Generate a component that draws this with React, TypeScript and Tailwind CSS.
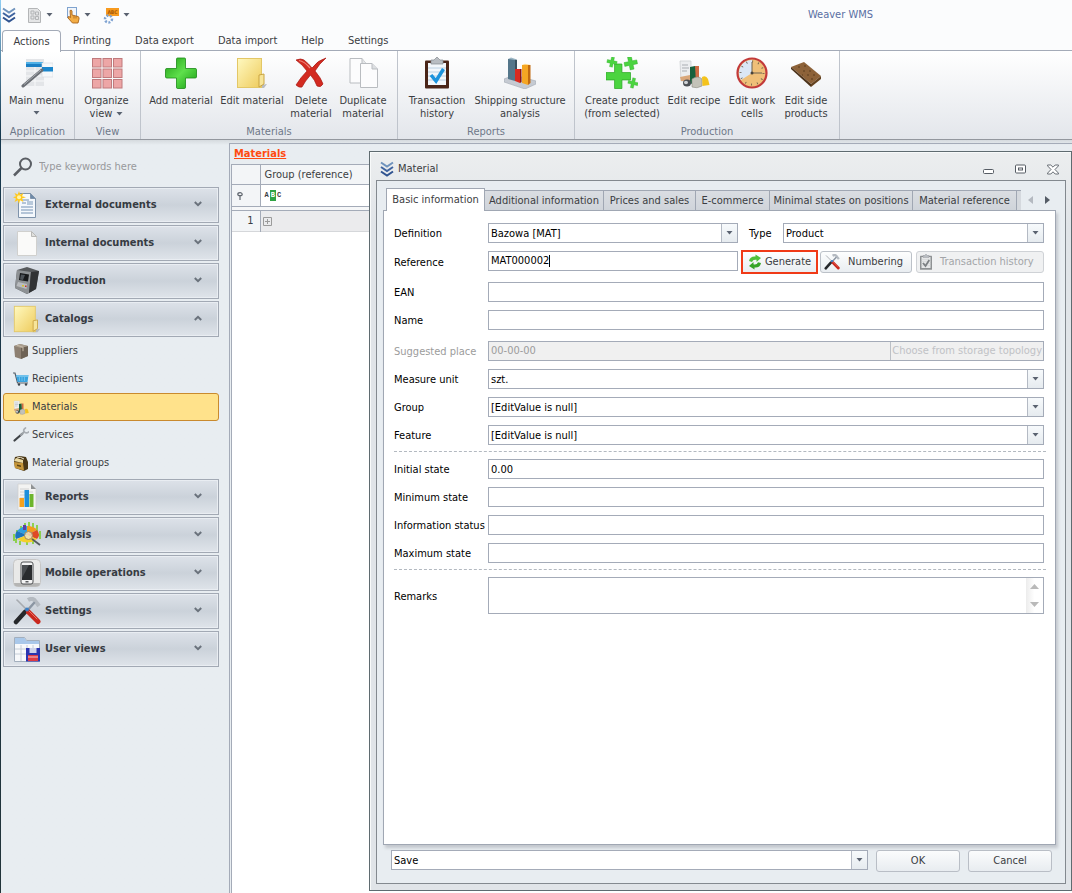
import { clsx } from "clsx";
import type { ReactNode } from "react";

/* ---------- icons ---------- */

function LogoIcon({ className }: { className?: string }) {
  return (
    <svg viewBox="0 0 14 16" className={clsx("h-4 w-[14px] shrink-0", className)} fill="none" stroke="#3f64a0" strokeWidth="2">
      <path d="M1 1.500 L7 5.500 L13 1.500" stroke="#6f93bd" />
      <path d="M1 6 L7 10 L13 6" />
      <path d="M1 10.500 L7 14.500 L13 10.500" stroke="#2f5390" />
    </svg>
  );
}

function Caret({ className }: { className?: string }) {
  return (
    <svg viewBox="0 0 7 4" className={clsx("h-1 w-[7px] shrink-0", className)}>
      <path d="M.5 0 H6.500 L3.500 3.500 Z" fill="#5a6270" />
    </svg>
  );
}

function MainMenuIcon() {
  return (
    <svg viewBox="0 0 32 32" className="size-8">
      <rect x="5" y="2" width="18" height="27" fill="#e3e5e8" />
      <path d="M5 14h18M5 19h18M5 24h18M14 6v23" stroke="#f8f9fa" />
      <rect x="5" y="5" width="17" height="5" fill="#1b7fc4" />
      <rect x="5" y="5" width="17" height="2" fill="#4fb0e6" />
      <rect x="21" y="6" width="11" height="14" fill="#f6f8fa" stroke="#d4d8dd" strokeWidth=".6" />
      <rect x="21" y="10" width="11" height="4.500" fill="#1b86cc" />
      <path d="M21 13 L2 29" stroke="#6b6f75" strokeWidth="3" strokeLinecap="round" />
      <path d="M20 13 L3 27.500" stroke="#a9adb2" strokeWidth="1" />
    </svg>
  );
}

function OrganizeIcon() {
  return (
    <svg viewBox="0 0 32 32" className="size-8">
      {[1.5, 12, 22.5].map((x) =>
        [1.5, 12, 22.5].map((y) => (
          <rect key={`${x}-${y}`} x={x} y={y} width="8.500" height="8.500" fill="#eda6a6" stroke="#c07a7c" />
        )),
      )}
    </svg>
  );
}

function PlusIcon() {
  return (
    <svg viewBox="0 0 32 32" className="size-8">
      <defs>
        <linearGradient id="plus" x1="0" y1="0" x2="1" y2="1">
          <stop offset="0" stopColor="#1f9c14" />
          <stop offset=".5" stopColor="#5fe04c" />
          <stop offset="1" stopColor="#159a10" />
        </linearGradient>
      </defs>
      <path
        d="M12.500 1h7q1 0 1 1v9.500H30q1.500 0 1.500 1V20q0 1-1.500 1h-9.500v9q0 1.500-1 1.500h-7q-1 0-1-1.500v-9H2q-1.500 0-1.500-1v-7.500q0-1 1.500-1h9.500V2q0-1 1-1z"
        fill="url(#plus)"
        stroke="#1c8a17"
        strokeWidth=".8"
      />
    </svg>
  );
}

function FolderIcon({ className = "size-8" }: { className?: string }) {
  return (
    <svg viewBox="0 0 32 32" className={className}>
      <defs>
        <linearGradient id="folder" x1="0" y1="0" x2="1" y2="1">
          <stop offset="0" stopColor="#fff9c0" />
          <stop offset="1" stopColor="#eecb5c" />
        </linearGradient>
      </defs>
      <path d="M25 28 l6 -1 -3 4 -6 0z" fill="#b9bcc0" />
      <rect x="1.500" y="1.500" width="24" height="29" fill="url(#folder)" stroke="#e3c766" />
      <path d="M23 18 l5 -1 v10 l-5 3z" fill="#f7e59a" stroke="#c9a443" />
    </svg>
  );
}

function DeleteIcon() {
  return (
    <svg viewBox="0 0 32 32" className="size-8">
      <path
        d="M1 3 Q6 1 9 3 Q14 7 17 11 Q23 3 31 1 Q24 7 20 14 Q26 21 28 27 Q26 31 22 29 Q20 23 15.500 18 Q10 24 7 30 Q4 31 1 28 Q6 20 12 14 Q8 8 1 3z"
        fill="#d32a20"
        stroke="#a61a14"
        strokeWidth=".7"
      />
      <path d="M4 3.500 Q9 4 15 11" stroke="#f0857a" strokeWidth="1.200" fill="none" />
    </svg>
  );
}

function DuplicateIcon() {
  return (
    <svg viewBox="0 0 32 32" className="size-8" fill="#fcfcfd" stroke="#b9bcc0">
      <path d="M3 1.500h12l4 5V26H3z" />
      <path d="M15 1.500v5h4" fill="#e4e6e8" />
      <path d="M13.500 6.500H25l5.500 5.500v18.500h-17z" />
      <path d="M25 6.500V12h5.500" fill="#dcdfe2" />
    </svg>
  );
}

function ClipboardIcon({ muted, className = "size-8" }: { muted?: boolean; className?: string }) {
  return (
    <svg viewBox="0 0 32 32" className={className}>
      <rect x="4" y="3.500" width="24" height="28" rx="1" fill={muted ? "#8f9294" : "#4a2518"} />
      <rect x="7" y="6" width="18" height="22" fill={muted ? "#e6e7e8" : "#f3f7fb"} />
      <path d="M7 11h18M7 15h18M7 19h18M7 23h18" stroke={muted ? "#cfd1d3" : "#bcd0e2"} />
      <path d="M10 3h3l3-3 3 3h3v4H10z" fill="#b9bdc2" stroke="#85898f" strokeWidth=".7" />
      <path d="M10 18 l5 6 L22.500 12" fill="none" stroke={muted ? "#7c8083" : "#1c93dd"} strokeWidth="3.500" />
    </svg>
  );
}

function ChartIcon() {
  return (
    <svg viewBox="0 0 32 32" className="size-8">
      <path d="M0 22 L10 18 L32 24 L32 27 L21 32 L0 25z" fill="#c5cad2" stroke="#a3a9b3" strokeWidth=".6" />
      <path d="M4 2h7v22l-7-2z" fill="#54768a" />
      <path d="M11 2l2 1v20l-2 1z" fill="#38515f" />
      <path d="M4 2l3-1.500 6 2-2 .5z" fill="#9cb6c4" />
      <path d="M11 12h5v14l-5-2z" fill="#d92a20" />
      <path d="M16 12l1.500 0v13l-1.500 1z" fill="#8e1511" />
      <path d="M18 8h6v20l-6-2z" fill="#f5a623" />
      <path d="M24 8l2.500 0v18l-2.500 2z" fill="#c26a10" />
      <path d="M18 8l3-1.200 5.500 1.200z" fill="#ffd88a" />
    </svg>
  );
}

const CROSS = "M3.500 0h3v3.500H10v3H6.500V10h-3V6.500H0v-3h3.500z";

function CreateProductIcon() {
  return (
    <svg viewBox="0 0 32 32" className="size-8" fill="#4bd440" stroke="#2aa824" strokeWidth=".3" strokeLinejoin="round">
      <path d={CROSS} transform="translate(0 7) scale(2.450)" />
      <path d={CROSS} transform="translate(1 0) rotate(12 5 5)" />
      <path d={CROSS} transform="translate(18 0) rotate(-12 5 5) scale(1.300)" />
      <path d={CROSS} transform="translate(22 21) rotate(14 5 5)" />
    </svg>
  );
}

function RecipeIcon({ className = "size-8" }: { className?: string }) {
  return (
    <svg viewBox="0 0 32 32" className={className}>
      <path d="M2 4h11v20H3z" fill="#eceef0" stroke="#c7cacd" strokeWidth=".7" />
      <path d="M4 8h6M4 11h7M4 14h5" stroke="#a9adb2" />
      <path d="M2 20l10-2v6H3z" fill="#d9a77a" />
      <path d="M17 9h4v17h-4z" fill="#cf6a43" />
      <path d="M12 10l5-1 1 17-6 1z" fill="#17603c" />
      <ellipse cx="9" cy="26" rx="4" ry="3.500" fill="#4b4f54" />
      <ellipse cx="8" cy="25.500" rx="2" ry="1.800" fill="#cfd2d6" />
      <path d="M14 22q6-4 10 0v7q-5 3-10 1z" fill="#c3c2b8" stroke="#8d8c82" strokeWidth=".6" />
      <path d="M24 20q4-2 6 2l1.500 6-7 1z" fill="#f4c31c" />
    </svg>
  );
}

function ClockIcon() {
  return (
    <svg viewBox="0 0 32 32" className="size-8">
      <circle cx="16" cy="16" r="14.500" fill="#efbf78" stroke="#c23a3a" strokeWidth="2.200" />
      <path d="M16 16V3A13 13 0 0 0 5 23z" fill="#dbe7f5" />
      <circle cx="16" cy="16" r="11.500" fill="none" stroke="#62584a" strokeWidth="2" strokeDasharray=".8 5.220" />
      <path d="M16 5v11h10" fill="none" stroke="#6c6250" />
      <circle cx="16" cy="16" r="1.500" fill="#4a4338" />
    </svg>
  );
}

function SideProductIcon() {
  return (
    <svg viewBox="0 0 32 32" className="size-8">
      <path d="M1 10L14 5l17 14-10 8z" fill="#8d6239" />
      <path d="M1 10l20 17v3L1 12z" fill="#4c3219" />
      <path d="M31 19L21 27v3l10-8z" fill="#64421f" />
      <path d="M8 10h2M14 9h2M13 14h2M19 14h2M17 18h2M23 18h2M21 22h2M12 18h1" stroke="#5b3c1e" />
    </svg>
  );
}

function NewDocIcon() {
  return (
    <svg viewBox="0 0 28 28" className="size-7">
      <path d="M5.500 2.500h12l5 5v19h-17z" fill="#f4f8fc" stroke="#7e93ab" />
      <path d="M17.500 2.500v5h5z" fill="#6e8aa8" stroke="#7e93ab" />
      <path d="M9 9h7M9 12h4M8 16h12M8 19h12M8 22h12" stroke="#9fb4cb" strokeWidth="1.500" />
      <rect x="14" y="10" width="6" height="4" fill="#b8c9db" />
      <path d="M6 0l1.200 3.500L10.500 2 9 5.200l4 1-4 1.300L10.500 11 7 9.300 6 13 4.800 9.300 1.500 11 3 7.500l-3-1.300 3-1L1.500 2l3.300 1.500z" fill="#ffc91f" />
      <circle cx="6" cy="6.300" r="2" fill="#fff3a8" />
    </svg>
  );
}

function BlankDocIcon() {
  return (
    <svg viewBox="0 0 28 28" className="size-7">
      <path d="M4.500 2.500h14l5 5v19h-19z" fill="#fafaf9" stroke="#d0d0ce" />
      <path d="M18.500 2.500v5h5z" fill="#e0e0de" stroke="#b9b9b7" />
    </svg>
  );
}

function MachineIcon() {
  return (
    <svg viewBox="0 0 28 28" className="size-7">
      <path d="M4 3L14 0l12 4-3 18-9 5-12-6z" fill="#56595c" />
      <path d="M4 3l14 2-2 21-2 1-12-6z" fill="#8d9194" />
      <path d="M18 5l8-1-3 18-7 4z" fill="#303234" />
      <path d="M7 6l9 1.500-1 7-9-1.500z" fill="#17191b" />
      <path d="M8 7.500l4 .5-2 5-3-.5z" fill="#4b5157" />
      <path d="M5 15l9 2-.5 5-10-3z" fill="#b9bcbf" />
      <rect x="9" y="18" width="2" height="1.500" fill="#d8c22f" />
      <rect x="12" y="18.500" width="1.500" height="1.500" fill="#c7372c" />
    </svg>
  );
}

function ReportIcon() {
  return (
    <svg viewBox="0 0 28 28" className="size-7">
      <path d="M5 1h13l5 5v21H5z" fill="#f3f3f2" stroke="#cfcfcf" strokeWidth=".7" />
      <path d="M18 1v5h5z" fill="#8f9294" />
      <path d="M7 6h9M7 9h13M7 12h13M7 15h13" stroke="#d2d2d2" />
      <rect x="6.500" y="15" width="4.500" height="9" fill="#f5a11d" />
      <rect x="11.500" y="7" width="4.500" height="17" fill="#1d8fdc" />
      <rect x="16.500" y="11" width="4" height="13" fill="#6db52c" />
    </svg>
  );
}

function AnalysisIcon() {
  return (
    <svg viewBox="0 0 28 28" className="size-7">
      <path
        d="M1 13v7M4 9v6M8 5v5M12 2v6M16 1v6M20 2v7M24 4v9M27 10v8M3 18v4M7 20v4M14 21v3M20 20v3"
        stroke="#7ccf2c"
        strokeWidth="1.600"
      />
      <path d="M14 14L4 10q5-5 10-5z" fill="#2e9fe0" />
      <path d="M14 14L4 10q-3 4-1 8z" fill="#1c74bd" />
      <path d="M14 14V5q7 0 10 4z" fill="#f39b1e" />
      <path d="M14 14l10-5q4 5 0 9z" fill="#df4a26" />
      <path d="M14 14l10 4q-9 7-20 0z" fill="#f5cf2a" />
      <path d="M10 4h3v5h-3z" fill="#5c3fa0" />
      <circle cx="15.500" cy="14.500" r="4" fill="#f3e2c4" fillOpacity=".8" stroke="#a3895c" />
      <path d="M19 18l8 6" stroke="#555b62" strokeWidth="1.800" />
    </svg>
  );
}

function PhoneIcon() {
  return (
    <svg viewBox="0 0 28 28" className="size-7">
      <rect x=".5" y=".5" width="27" height="27" rx="4" fill="#e9e9e8" stroke="#c6c6c6" />
      <path d="M1 24q0 3.500 4 3.500h18q4 0 4-3.500z" fill="#b5b5b4" />
      <rect x="8" y="3" width="12" height="22" rx="2" fill="#f4f4f4" stroke="#4d4f51" />
      <rect x="9" y="6" width="10" height="15" fill="#2a2c2e" />
      <path d="M9 6h7l-7 13z" fill="#4b4e51" />
      <rect x="12.500" y="22" width="3" height="1.500" fill="#5b5d60" />
    </svg>
  );
}

function ToolsIcon({ className = "size-7" }: { className?: string }) {
  return (
    <svg viewBox="0 0 28 28" className={className} fill="none" strokeLinecap="round">
      <path d="M4 3l10 10" stroke="#a7abb0" strokeWidth="1.600" />
      <path d="M15 3q5-3 8 2l3 4" stroke="#b4bac1" strokeWidth="4" strokeLinecap="butt" />
      <path d="M21 6L13 15" stroke="#8b96a3" strokeWidth="2.500" />
      <path d="M12 15L3 25" stroke="#26282b" strokeWidth="4.500" />
      <path d="M15.500 15L25 24.500" stroke="#c9281e" strokeWidth="5" />
      <path d="M16 14l8 8" stroke="#ec7467" strokeWidth="1" />
      <circle cx="14" cy="12.500" r="2" fill="#3d7fc4" />
    </svg>
  );
}

function UserViewsIcon() {
  return (
    <svg viewBox="0 0 28 28" className="size-7">
      <path d="M1.500 2.500h10l2 3h13v21h-25z" fill="#f7f9fb" stroke="#a3afbd" />
      <path d="M2 3h9.500l2 3H26v3H2z" fill="#a9c8ea" />
      <path d="M2 14h24M2 19h24M8 10v16M14 10v16M20 10v16" stroke="#c6ced8" />
      <rect x="13" y="13" width="14" height="13.500" fill="#2a35b0" />
      <rect x="16.500" y="13" width="7" height="5" fill="#cdd3ea" />
      <rect x="15" y="20" width="10" height="6" fill="#dd3b45" />
      <path d="M15 22h10" stroke="#f5c5c8" />
    </svg>
  );
}

function BoxIcon() {
  return (
    <svg viewBox="0 0 16 16" className="size-4">
      <path d="M1 3l6-2 8 2v10l-7 3-6-2z" fill="#8d8072" />
      <path d="M8 5l7-2v10l-7 3z" fill="#6e6255" />
      <path d="M1 3l6-2 8 2-7 2z" fill="#a99d8e" />
      <path d="M4 2.200l6 2v4" stroke="#c7bba9" fill="none" />
    </svg>
  );
}

function CartIcon() {
  return (
    <svg viewBox="0 0 16 16" className="size-4">
      <path d="M0 2h2l2.500 10H15" fill="none" stroke="#54606b" strokeWidth="1.200" />
      <path d="M3 4h12.500l-1 7H4.500z" fill="#39a4df" />
      <path d="M3.500 5H15" stroke="#a8def8" />
      <path d="M6.500 6v4M9 6v4M11.500 6v4" stroke="#7fcaf0" strokeWidth=".7" />
      <circle cx="6" cy="13.500" r="1.200" fill="#3b444c" />
      <circle cx="13" cy="13.500" r="1.200" fill="#3b444c" />
    </svg>
  );
}

function WrenchIcon() {
  return (
    <svg viewBox="0 0 16 16" className="size-4" fill="none" strokeLinecap="round">
      <path d="M1.500 13.500L9 7" stroke="#3f4347" strokeWidth="2.200" />
      <path d="M8 8l3-3" stroke="#9fa4a9" strokeWidth="2" />
      <path d="M12.500 1q-3 2-1 4t4 0" stroke="#a9aeb3" strokeWidth="1.700" />
    </svg>
  );
}

function BagIcon() {
  return (
    <svg viewBox="0 0 16 16" className="size-4">
      <path d="M2 2l5-1 6 1 2 5v7l-4 2-9-3-1-7z" fill="#4a3817" />
      <path d="M1 7l9 1 1 7.500-9-2.500z" fill="#c4953a" />
      <path d="M1 6l2-3 7 2v3z" fill="#ead9a2" />
      <path d="M4 3q3-2 7 1" fill="none" stroke="#f2ead2" />
      <path d="M4 9.500l4 1v1.500l-4-1z" fill="#5c4314" />
    </svg>
  );
}

function RefreshIcon() {
  return (
    <svg viewBox="0 0 14 16" className="h-4 w-[14px]" fill="#4fbf3a">
      <path d="M1 7Q2 2 7.500 2.500L7.500 .5 13 4 8.500 8V5.800Q5 5 4 8z" />
      <path d="M13 9q-1 5-6.500 4.500v2L1 12l4.500-4v2.200q3.500.8 4.500-2z" fill="#37a528" />
    </svg>
  );
}

function SearchIcon() {
  return (
    <svg viewBox="0 0 20 20" className="size-5 shrink-0" fill="none" stroke="#5a5e64">
      <circle cx="12.500" cy="7" r="5.500" strokeWidth="2" />
      <path d="M8.500 11L1 18.500" strokeWidth="2.500" />
    </svg>
  );
}

function Chevron({ up }: { up?: boolean }) {
  return (
    <svg
      viewBox="0 0 8 6"
      className={clsx("mb-0.5 mr-4 h-[6px] w-2 shrink-0", up && "rotate-180")}
      fill="none"
      stroke="#6a727c"
      strokeWidth="2"
    >
      <path d="M.8 1L4 4.200 7.200 1" />
    </svg>
  );
}

/* ---------- data ---------- */

type RibbonButton = { label: string; icon: ReactNode; width: string; drop?: "inline" | "below" };

const RIBBON: { title: string; width: string; buttons: RibbonButton[] }[] = [
  {
    title: "Application",
    width: "w-[74px]",
    buttons: [{ label: "Main menu", icon: <MainMenuIcon />, width: "w-[70px]", drop: "below" }],
  },
  {
    title: "View",
    width: "w-[66px]",
    buttons: [{ label: "Organize view", icon: <OrganizeIcon />, width: "w-[62px]", drop: "inline" }],
  },
  {
    title: "Materials",
    width: "w-[257px]",
    buttons: [
      { label: "Add material", icon: <PlusIcon />, width: "w-[72px]" },
      { label: "Edit material", icon: <FolderIcon />, width: "w-[70px]" },
      { label: "Delete material", icon: <DeleteIcon />, width: "w-12" },
      { label: "Duplicate material", icon: <DuplicateIcon />, width: "w-14" },
    ],
  },
  {
    title: "Reports",
    width: "w-[177px]",
    buttons: [
      { label: "Transaction history", icon: <ClipboardIcon />, width: "w-[70px]" },
      { label: "Shipping structure analysis", icon: <ChartIcon />, width: "w-24" },
    ],
  },
  {
    title: "Production",
    width: "w-[265px]",
    buttons: [
      { label: "Create product (from selected)", icon: <CreateProductIcon />, width: "w-[84px]" },
      { label: "Edit recipe", icon: <RecipeIcon />, width: "w-[60px]" },
      { label: "Edit work cells", icon: <ClockIcon />, width: "w-14" },
      { label: "Edit side products", icon: <SideProductIcon />, width: "w-[52px]" },
    ],
  },
];

const CATALOG_ITEMS = [
  { label: "Suppliers", icon: <BoxIcon /> },
  { label: "Recipients", icon: <CartIcon /> },
  { label: "Materials", icon: <RecipeIcon className="size-4" />, active: true },
  { label: "Services", icon: <WrenchIcon /> },
  { label: "Material groups", icon: <BagIcon /> },
];

const SECTIONS = [
  { label: "External documents", icon: <NewDocIcon /> },
  { label: "Internal documents", icon: <BlankDocIcon /> },
  { label: "Production", icon: <MachineIcon /> },
  { label: "Catalogs", icon: <FolderIcon className="size-7" />, items: CATALOG_ITEMS },
  { label: "Reports", icon: <ReportIcon /> },
  { label: "Analysis", icon: <AnalysisIcon /> },
  { label: "Mobile operations", icon: <PhoneIcon /> },
  { label: "Settings", icon: <ToolsIcon /> },
  { label: "User views", icon: <UserViewsIcon /> },
];

const DIALOG_TABS = [
  { label: "Additional information", width: "w-[119px]" },
  { label: "Prices and sales", width: "w-[92px]" },
  { label: "E-commerce", width: "w-[74px]" },
  { label: "Minimal states on positions", width: "w-[143px]" },
  { label: "Material reference", width: "w-[104px]" },
];

/* ---------- shell ---------- */

function TitleBar() {
  return (
    <header className="flex h-[30px] items-center bg-[#fbfcfd] pl-px">
      <LogoIcon />
      <button aria-label="Layout" className="ml-[11px] flex items-center gap-[3px]">
        <svg viewBox="0 0 16 16" className="size-4" fill="#e4e5e6" stroke="#b3b5b7">
          <path d="M1.500 1.500h9l3 3v11h-12z" />
          <path d="M4 4h3v3H4zM8.500 5h3v3h-3zM4 9h3v3H4zM8.500 9.500h3v3h-3z" />
        </svg>
        <Caret />
      </button>
      <button aria-label="Touch mode" className="ml-3 flex items-center gap-[3px]">
        <svg viewBox="0 0 16 17" className="h-[17px] w-4">
          <rect x="2.500" y=".5" width="9" height="10" fill="#f2f6fb" stroke="#7fa3cf" />
          <path
            d="M5 3.500q1.500-1 2 .5V8l6 1.500q1.500.5 1 2.500l-1 4H7.500L3 11q-.5-1.500 1-1.500l1.500 1z"
            fill="#f3ad45"
            stroke="#a9641b"
            strokeWidth=".9"
          />
          <path d="M9 9v2.500M11 9.500v2" stroke="#a9641b" strokeWidth=".8" />
        </svg>
        <Caret />
      </button>
      <button aria-label="Language" className="ml-3 flex items-center gap-[3px]">
        <svg viewBox="0 0 17 17" className="size-[17px]">
          <rect x="3" y="1" width="13" height="8" fill="#f79a1e" />
          <text x="9.500" y="7" textAnchor="middle" fontSize="5" fontWeight="700" fill="#a85a08">
            ABC
          </text>
          <circle cx="5.500" cy="12" r="3.500" fill="none" stroke="#7ea3d2" strokeWidth="2.500" strokeDasharray="2 1.500" />
        </svg>
        <Caret />
      </button>
      <h1 className="ml-auto mr-[199px] text-[#5a6fa3]">Weaver WMS</h1>
    </header>
  );
}

function RibbonTabs() {
  return (
    <nav className="flex h-5 bg-[#fbfcfd] pl-px">
      <a
        href="#actions"
        className="relative z-10 -mb-px flex h-[22px] w-[59px] items-center justify-center rounded-t border border-b-0 border-[#a4abb8] bg-white"
      >
        Actions
      </a>
      <div className="flex items-center pt-0.5">
        {["Printing", "Data export", "Data import", "Help", "Settings"].map((tab) => (
          <a key={tab} href={`#${tab}`} className="px-3">
            {tab}
          </a>
        ))}
      </div>
    </nav>
  );
}

function Ribbon() {
  return (
    <div className="flex h-[90px] border-y border-t-[#a4abb8] border-b-[#93979e] bg-linear-to-b from-white to-[#e3e6eb]">
      {RIBBON.map((group) => (
        <section
          key={group.title}
          className={clsx("flex shrink-0 flex-col justify-between border-r border-[#bfc4cc] pt-1.5", group.width)}
        >
          <div className="flex justify-center pr-0.5">
            {group.buttons.map((b) => (
              <button key={b.label} className={clsx("flex flex-col items-center", b.width)}>
                {b.icon}
                <span className="mt-[5px] leading-[13px]">
                  {b.label}
                  {b.drop === "inline" && <Caret className="ml-1 inline" />}
                </span>
                {b.drop === "below" && <Caret className="mt-1" />}
              </button>
            ))}
          </div>
          <h2 className="text-center text-[#6e7889]">{group.title}</h2>
        </section>
      ))}
    </div>
  );
}

function Sidebar() {
  return (
    <aside className="flex w-[218px] shrink-0 flex-col gap-0.5 pl-0.5">
      <label className="flex h-11 items-center gap-1.5 pl-[10px] pt-2">
        <SearchIcon />
        <input
          aria-label="Search"
          placeholder="Type keywords here"
          className="w-full bg-transparent outline-none placeholder:text-[#98999c]"
        />
      </label>
      {SECTIONS.map((section) => (
        <div key={section.label}>
          <button className="flex h-9 w-full items-center gap-1 border border-[#a2a9b4] bg-linear-to-b from-[#dde2e9] via-[#cbd2da] to-[#dfe4ea] pl-[9px] text-left font-bold text-[#363b42] shadow-[inset_0_0_0_1px_#e9edf2]">
            {section.icon}
            <span className="flex-1">{section.label}</span>
            <Chevron up={!!section.items} />
          </button>
          {section.items && (
            <ul>
              {section.items.map((item) => (
                <li key={item.label}>
                  <a
                    href={`#${item.label}`}
                    className={clsx(
                      "flex h-7 items-center gap-[3px] rounded-[3px] border pl-[9px]",
                      item.active ? "border-[#c98a2e] bg-[#ffe28b]" : "border-transparent",
                    )}
                  >
                    {item.icon}
                    {item.label}
                  </a>
                </li>
              ))}
            </ul>
          )}
        </div>
      ))}
    </aside>
  );
}

function Workspace() {
  return (
    <main className="ml-[10px] mt-0.5 flex flex-1 flex-col border-l border-t border-[#a4abb8]">
      <div className="flex h-5 items-center pl-1">
        <a href="#materials" className="font-bold text-[#ff4a10] underline">
          Materials
        </a>
      </div>
      <div className="ml-px flex-1 border-l border-[#a4abb8] bg-white">
        <table className="w-full table-fixed border-collapse">
          <colgroup>
            <col className="w-7" />
            <col />
          </colgroup>
          <thead>
            <tr className="h-5 border-y border-[#a4abb8] bg-[#f3f5f7]">
              <th className="border-r border-[#a4abb8]" />
              <th className="pl-1 text-left font-normal">Group (reference)</th>
            </tr>
            <tr className="h-[22px] border-b border-[#a4abb8]">
              <td className="border-r border-[#a4abb8] bg-[#f3f5f7]">
                <svg viewBox="0 0 6 8" className="ml-[5px] h-2 w-1.5" fill="none" stroke="#5f656d" strokeWidth="1.200">
                  <ellipse cx="3" cy="2.200" rx="2.200" ry="1.500" />
                  <path d="M3 3.500V8" />
                </svg>
              </td>
              <td className="pl-1">
                <span className="flex items-center gap-px font-['Liberation_Mono',monospace] text-[7px] font-bold leading-[11px]">
                  A<span className="bg-[#2fa344] px-px text-white">B</span>C
                </span>
              </td>
            </tr>
            <tr className="h-1 border-b border-[#a4abb8] bg-[#f6f7f8]">
              <td colSpan={2} />
            </tr>
          </thead>
          <tbody>
            <tr className="h-[21px] border-b border-[#d5d7da] bg-[#ebebed]">
              <td className="border-r border-[#a4abb8] bg-[#f3f5f7] pr-1.5 text-right">1</td>
              <td className="pl-0.5">
                <button aria-label="Expand row" className="block size-[9px]">
                  <svg viewBox="0 0 9 9" className="size-[9px]" fill="none" stroke="#9b9b9b">
                    <path d="M.5.5h8v8h-8zM2 4.500h5M4.500 2v5" />
                  </svg>
                </button>
              </td>
            </tr>
          </tbody>
        </table>
      </div>
    </main>
  );
}

/* ---------- dialog ---------- */

const BOX = "h-5 w-full border border-[#a4abb8] bg-white px-0.5 leading-[18px] text-black outline-none";

function Field({ id, label, muted, children }: { id: string; label: string; muted?: boolean; children: ReactNode }) {
  return (
    <div className="grid grid-cols-[94px_1fr] items-center">
      <label htmlFor={id} className={clsx("whitespace-nowrap pt-0.5", muted ? "text-[#9c9c9c]" : "text-black")}>
        {label}
      </label>
      {children}
    </div>
  );
}

function Select({ id, value, label }: { id: string; value: string; label?: string }) {
  return (
    <div className="grid h-5 min-w-0 flex-1">
      <select
        id={id}
        aria-label={label}
        defaultValue={value}
        className={clsx(BOX, "col-start-1 row-start-1 appearance-none pt-px")}
      >
        <option>{value}</option>
      </select>
      <span className="pointer-events-none col-start-1 row-start-1 m-px flex w-4 items-center justify-center justify-self-end border-l border-[#b4bac4] bg-linear-to-b from-[#f7fafc] to-[#e6ebef]">
        <Caret />
      </span>
    </div>
  );
}

function TextField({ id, label, value }: { id: string; label: string; value?: string }) {
  return (
    <Field id={id} label={label}>
      <input id={id} defaultValue={value} className={BOX} />
    </Field>
  );
}

function Divider() {
  return <hr className="-mr-0.5 mb-[7px] mt-1.5 border-dashed border-[#b3b9c0]" />;
}

function MaterialForm() {
  return (
    <form className="flex flex-1 flex-col border border-[#a0a7b3] bg-white pl-[10px] pr-[11px] pt-3 shadow-[2px_3px_3px_#c3c7cd]">
      <div className="flex flex-col gap-2">
        <Field id="definition" label="Definition">
          <div className="grid grid-cols-[250px_1fr]">
            <Select id="definition" value="Bazowa [MAT]" />
            <div className="flex items-center pl-[11px]">
              <label htmlFor="type" className="w-[34px] pt-0.5 text-black">
                Type
              </label>
              <Select id="type" value="Product" />
            </div>
          </div>
        </Field>
        <Field id="reference" label="Reference">
          <div className="grid h-[22px] grid-cols-[250px_1fr]">
            <div className={clsx(BOX, "flex items-center")}>
              <input id="reference" defaultValue="MAT000002" className="field-sizing-content outline-none" />
              <span className="h-3 w-px bg-black" />
            </div>
            <div className="flex gap-0.5 pl-[3px]">
              <button
                type="button"
                className="-my-px flex h-6 w-[77px] items-center justify-center gap-[3px] border-2 border-[#f03a17] bg-linear-to-b from-[#fdfefe] to-[#e9edf1]"
              >
                <RefreshIcon />
                Generate
              </button>
              <button
                type="button"
                className="flex h-[22px] w-[92px] items-center gap-2 rounded-[3px] border border-[#bcc1c8] bg-linear-to-b from-[#fdfefe] to-[#e9edf1] pl-[3px]"
              >
                <ToolsIcon className="size-4" />
                Numbering
              </button>
              <button
                type="button"
                disabled
                className="ml-0.5 flex h-[22px] flex-1 items-center gap-1.5 rounded-[3px] border border-[#cfd2d6] bg-[#f0f1f2] pl-px text-[#a3a5a8]"
              >
                <ClipboardIcon muted className="size-4" />
                Transaction history
              </button>
            </div>
          </div>
        </Field>
      </div>

      <div className="mt-[9px] flex flex-col gap-2">
        <TextField id="ean" label="EAN" />
        <TextField id="name" label="Name" />
      </div>

      <div className="mt-[11px] flex flex-col gap-2">
        <Field id="place" label="Suggested place" muted>
          <div className="flex h-5 border border-[#a4abb8] bg-[#f0f0f0]">
            <input id="place" disabled defaultValue="00-00-00" className="min-w-0 flex-1 px-0.5 text-[#9c9c9c]" />
            <button type="button" disabled className="border-l border-[#bcc0c6] px-px text-[#c0c2c6]">
              Choose from storage topology
            </button>
          </div>
        </Field>
        <Field id="unit" label="Measure unit">
          <Select id="unit" value="szt." />
        </Field>
        <Field id="group" label="Group">
          <Select id="group" value="[EditValue is null]" />
        </Field>
        <Field id="feature" label="Feature">
          <Select id="feature" value="[EditValue is null]" />
        </Field>
      </div>

      <Divider />

      <div className="flex flex-col gap-2">
        <TextField id="initial" label="Initial state" value="0.00" />
        <TextField id="minimum" label="Minimum state" />
        <TextField id="information" label="Information status" />
        <TextField id="maximum" label="Maximum state" />
      </div>

      <Divider />

      <Field id="remarks" label="Remarks">
        <div className="flex h-[37px] border border-[#a4abb8] bg-white">
          <textarea id="remarks" className="min-w-0 flex-1 resize-none outline-none" />
          <span className="flex w-[17px] flex-col items-center justify-between bg-linear-to-r from-[#ececec] to-white to-50% py-1.5">
            <svg viewBox="0 0 9 5" className="h-[5px] w-[9px]" fill="#b9b9b9">
              <path d="M0 5L4.500 0 9 5z" />
            </svg>
            <svg viewBox="0 0 9 5" className="h-[5px] w-[9px]" fill="#b9b9b9">
              <path d="M0 0h9L4.500 5z" />
            </svg>
          </span>
        </div>
      </Field>
    </form>
  );
}

const FOOTER_BUTTON = "h-[22px] w-[84px] rounded-[3px] border border-[#b9bec6] bg-linear-to-b from-[#fbfcfd] to-[#e8ecf0]";

function MaterialDialog() {
  return (
    <div
      role="dialog"
      aria-label="Material"
      className="absolute bottom-0.5 left-[369px] right-0 top-[151px] z-20 flex flex-col border border-[#5f6b70] bg-linear-to-b from-[#eceeef] to-[#e0e4e8] to-10% pb-1.5 pl-1.5 pr-[5px] shadow-[inset_1px_1px_0_#f8fafa]"
    >
      <div className="flex h-7 shrink-0 items-center gap-1 pl-1 pr-[7px] pt-1.5">
        <LogoIcon />
        <span className="flex-1">Material</span>
        <div className="flex items-center gap-5">
          <button aria-label="Minimize">
            <svg viewBox="0 0 12 11" className="h-[11px] w-3" fill="#fff" stroke="#565c64">
              <rect x=".5" y="5.500" width="10" height="4" rx="1" />
            </svg>
          </button>
          <button aria-label="Maximize">
            <svg viewBox="0 0 12 11" className="h-[11px] w-3" fill="#fff" stroke="#565c64">
              <rect x=".5" y="1" width="10" height="8" rx="1" />
              <rect x="3.500" y="4" width="4" height="2" />
            </svg>
          </button>
          <button aria-label="Close">
            <svg viewBox="0 0 12 11" className="h-[11px] w-3" fill="#fff" stroke="#565c64" strokeWidth=".9">
              <path d="M.5 1h3.300L6 3.200 8.200 1h3.300v.8L8 5.500l3.500 3.700v.8H8.200L6 7.800 3.800 10H.5v-.8L4 5.500.5 1.800z" />
            </svg>
          </button>
        </div>
      </div>

      <div className="flex flex-1 flex-col border border-[#83898f] bg-[#e8edf1] pl-1.5 pr-[9px] pt-[7px]">
        <div className="relative z-10 -mb-px flex h-[23px] shrink-0 items-end pl-[3px]">
          <button className="h-[23px] w-[99px] whitespace-nowrap border border-b-0 border-[#a0a7b3] bg-white text-center">
            Basic information
          </button>
          {DIALOG_TABS.map((tab) => (
            <button
              key={tab.label}
              className={clsx(
                "h-[21px] whitespace-nowrap border border-l-0 border-[#a0a7b3] bg-linear-to-b from-[#dadde2] to-[#cfd4da] text-center",
                tab.width,
              )}
            >
              {tab.label}
            </button>
          ))}
          <span className="h-[21px] w-1 border-y border-[#a0a7b3] bg-[#d5d9de]" />
          <div className="flex h-[23px] flex-1 items-center justify-center gap-3">
            <button aria-label="Previous tab">
              <svg viewBox="0 0 5 8" className="h-2 w-[5px]">
                <path d="M5 0v8L0 4z" fill="#b4b9c0" />
              </svg>
            </button>
            <button aria-label="Next tab">
              <svg viewBox="0 0 5 8" className="h-2 w-[5px]">
                <path d="M0 0v8l5-4z" fill="#555c66" />
              </svg>
            </button>
          </div>
        </div>

        <MaterialForm />

        <div className="flex h-[38px] shrink-0 gap-2 pl-2 pr-1 pt-[5px]">
          <Select id="action" label="Action" value="Save" />
          <button className={FOOTER_BUTTON}>OK</button>
          <button className={FOOTER_BUTTON}>Cancel</button>
        </div>
      </div>
    </div>
  );
}

export default function App() {
  return (
    <div className="relative flex min-h-screen bg-[#e8edf1] font-['DejaVu_Sans_Condensed','DejaVu_Sans',sans-serif] text-[11px] leading-[14px] text-[#3b3d42]">
      <div className="w-px shrink-0 bg-linear-to-b from-[#8fcdf3] via-[#16384e] via-15% to-[#22343a]" />
      <div className="flex min-w-0 flex-1 flex-col">
        <TitleBar />
        <RibbonTabs />
        <Ribbon />
        <div className="flex flex-1 bg-linear-to-b from-[#d5dade] to-[#e8edf1] to-[5px] pt-px">
          <Sidebar />
          <Workspace />
        </div>
      </div>
      <MaterialDialog />
    </div>
  );
}
